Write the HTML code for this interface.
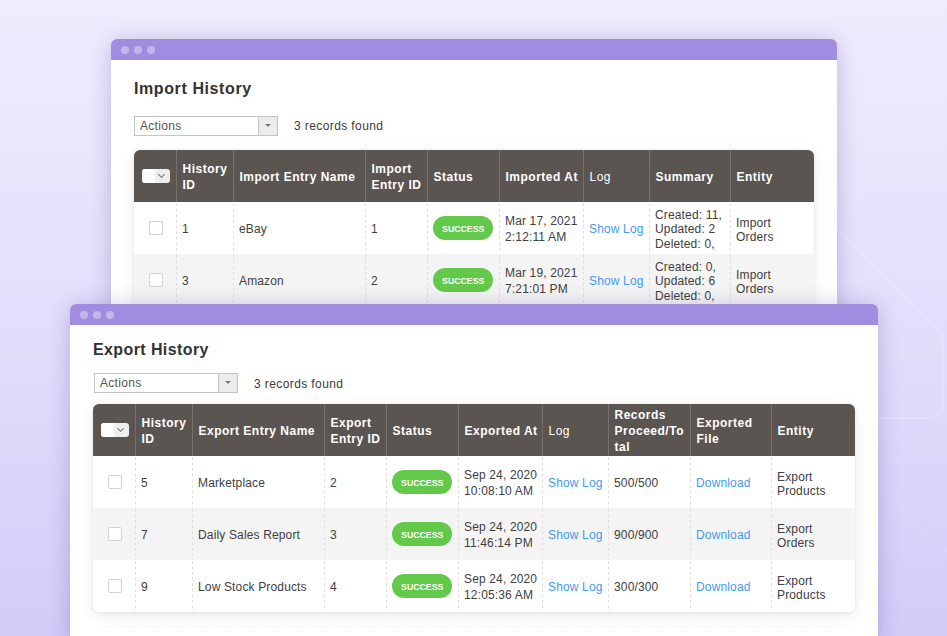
<!DOCTYPE html>
<html><head><meta charset="utf-8">
<style>
*{margin:0;padding:0;box-sizing:border-box}
html,body{width:947px;height:636px;overflow:hidden}
body{position:relative;font-family:"Liberation Sans",sans-serif;color:#333;
background:linear-gradient(180deg,#efecfe 0%,#e3defb 50%,#d3ccf8 100%)}
.win{position:absolute;background:#fff;border-radius:6px 6px 0 0;
box-shadow:0 2px 22px rgba(50,30,130,.24)}
.bar{height:21px;background:#a08ddf;border-radius:6px 6px 0 0;position:relative}
.dot{position:absolute;top:7px;width:8px;height:8px;border-radius:50%;background:#c3b5ec}
.title{position:absolute;font-weight:bold;font-size:16px;color:#333;letter-spacing:.6px}
.sel{position:absolute;height:20px;border:1px solid #c4c4c4;background:#fff}
.sel span{position:absolute;left:5px;top:2px;font-size:12px;color:#555;letter-spacing:.3px}
.sel i{position:absolute;right:0;top:0;width:19px;height:18px;border-left:1px solid #c4c4c4;background:#ececec}
.sel i:after{content:"";position:absolute;left:6px;top:7px;border-left:3px solid transparent;border-right:3px solid transparent;border-top:3px solid #7a7a7a}
.found{position:absolute;font-size:12px;color:#3a3a3a;letter-spacing:.4px}
table{position:absolute;border-collapse:collapse;table-layout:fixed;border-radius:6px;
box-shadow:0 1px 4px rgba(0,0,0,.07),0 4px 16px rgba(0,0,0,.07);overflow:hidden;background:#fff}
th{background:#5b5552;color:#fff;font-size:12px;font-weight:bold;text-align:left;line-height:16px;
padding:2px 0 0 6px;height:52px;vertical-align:middle;border-left:1px solid #75706d;letter-spacing:.5px}
th:first-child{border-left:none}
th.n{font-weight:normal}
td{font-size:12px;color:#404040;letter-spacing:.15px;line-height:14px;padding:2px 0 0 6px;height:52px;vertical-align:middle;
background:linear-gradient(#dedede 50%,rgba(255,255,255,0) 50%) 0 1px/1px 5.6px repeat-y}
td.d{line-height:16px}
td.s{line-height:14.6px;padding-top:3px}
td.e{padding-top:4px}
td:first-child{background:none}
tr.alt td:first-child{background:#f4f4f4}
tr.alt td{background-color:#f4f4f4}
.cb{display:block;width:14px;height:14px;border:1px solid #d2d2d2;border-radius:2px;background:#fff;margin-left:9px;position:relative;top:-1px}
.mcb{position:relative;width:28px;height:14px;border-radius:3px;background:#eee;margin-left:2px;top:-1px}
.mcb:before{content:"";position:absolute;left:0;top:0;width:13px;height:14px;background:#fff;border-radius:3px 0 0 3px}
.mcb:after{content:"";position:absolute;left:17px;top:3px;width:4px;height:4px;border-right:1px solid #777;border-bottom:1px solid #777;transform:rotate(45deg)}
.ok{display:inline-block;width:60px;height:24px;border-radius:12px;background:#63c94b;color:#fff;font-size:9.6px;font-weight:bold;position:relative;top:-1px;
text-align:center;line-height:26px;letter-spacing:0}
.ok b{display:inline-block;transform:scaleX(.91)}
a{color:#449bea;text-decoration:none}
</style></head><body>

<svg width="947" height="636" style="position:absolute;left:0;top:0">
<path d="M700,91 L935,326 Q943,334 943,346 L943,402 Q943,418 927,418 L860,418" fill="none" stroke="rgba(255,255,255,.25)" stroke-width="1.5"/>
<path d="M885,491 L960,566" fill="none" stroke="rgba(255,255,255,.15)" stroke-width="1.5"/>
</svg>
<!-- Import window -->
<div class="win" style="left:111px;top:39px;width:726px;height:300px">
  <div class="bar"><span class="dot" style="left:10px"></span><span class="dot" style="left:23px"></span><span class="dot" style="left:36px"></span></div>
</div>
<div class="title" style="left:134px;top:80px">Import History</div>
<div class="sel" style="left:134px;top:116px;width:144px"><span>Actions</span><i></i></div>
<div class="found" style="left:294px;top:119px">3 records found</div>
<table style="left:134px;top:150px;width:680px">
<colgroup><col style="width:42px"><col style="width:57px"><col style="width:132px"><col style="width:62px"><col style="width:72px"><col style="width:84px"><col style="width:66px"><col style="width:81px"><col style="width:84px"></colgroup>
<tr><th><div class="mcb" style="margin-left:2px"></div></th><th>History<br>ID</th><th>Import Entry Name</th><th>Import<br>Entry ID</th><th>Status</th><th>Imported At</th><th class="n">Log</th><th>Summary</th><th>Entity</th></tr>
<tr><td><span class="cb"></span></td><td>1</td><td>eBay</td><td>1</td><td><span class="ok"><b>SUCCESS</b></span></td><td class="d">Mar 17, 2021<br>2:12:11 AM</td><td><a>Show Log</a></td><td class="s">Created: 11,<br>Updated: 2<br>Deleted: 0,</td><td class="e">Import<br>Orders</td></tr>
<tr class="alt"><td><span class="cb"></span></td><td>3</td><td>Amazon</td><td>2</td><td><span class="ok"><b>SUCCESS</b></span></td><td class="d">Mar 19, 2021<br>7:21:01 PM</td><td><a>Show Log</a></td><td class="s">Created: 0,<br>Updated: 6<br>Deleted: 0,</td><td class="e">Import<br>Orders</td></tr>
</table>

<!-- Export window -->
<div class="win" style="left:70px;top:304px;width:808px;height:340px">
  <div class="bar"><span class="dot" style="left:10px"></span><span class="dot" style="left:23px"></span><span class="dot" style="left:36px"></span></div>
</div>
<div class="title" style="left:93px;top:341px;letter-spacing:.4px">Export History</div>
<div class="sel" style="left:94px;top:373px;width:144px"><span>Actions</span><i></i></div>
<div class="found" style="left:254px;top:377px">3 records found</div>
<table style="left:93px;top:404px;width:762px">
<colgroup><col style="width:42px"><col style="width:57px"><col style="width:132px"><col style="width:62px"><col style="width:72px"><col style="width:84px"><col style="width:66px"><col style="width:82px"><col style="width:81px"><col style="width:84px"></colgroup>
<tr><th><div class="mcb"></div></th><th>History<br>ID</th><th>Export Entry Name</th><th>Export<br>Entry ID</th><th>Status</th><th>Exported At</th><th class="n">Log</th><th>Records<br>Proceed/To<br>tal</th><th>Exported<br>File</th><th>Entity</th></tr>
<tr><td><span class="cb"></span></td><td>5</td><td>Marketplace</td><td>2</td><td><span class="ok"><b>SUCCESS</b></span></td><td class="d">Sep 24, 2020<br>10:08:10 AM</td><td><a>Show Log</a></td><td>500/500</td><td><a>Download</a></td><td class="e">Export<br>Products</td></tr>
<tr class="alt"><td><span class="cb"></span></td><td>7</td><td>Daily Sales Report</td><td>3</td><td><span class="ok"><b>SUCCESS</b></span></td><td class="d">Sep 24, 2020<br>11:46:14 PM</td><td><a>Show Log</a></td><td>900/900</td><td><a>Download</a></td><td class="e">Export<br>Orders</td></tr>
<tr><td><span class="cb"></span></td><td>9</td><td>Low Stock Products</td><td>4</td><td><span class="ok"><b>SUCCESS</b></span></td><td class="d">Sep 24, 2020<br>12:05:36 AM</td><td><a>Show Log</a></td><td>300/300</td><td><a>Download</a></td><td class="e">Export<br>Products</td></tr>
</table>

<div style="position:absolute;left:103px;top:626px;width:742px;height:1px;background:repeating-linear-gradient(90deg,#f2f2f2 0 3px,transparent 3px 6px)"></div>
</body></html>
